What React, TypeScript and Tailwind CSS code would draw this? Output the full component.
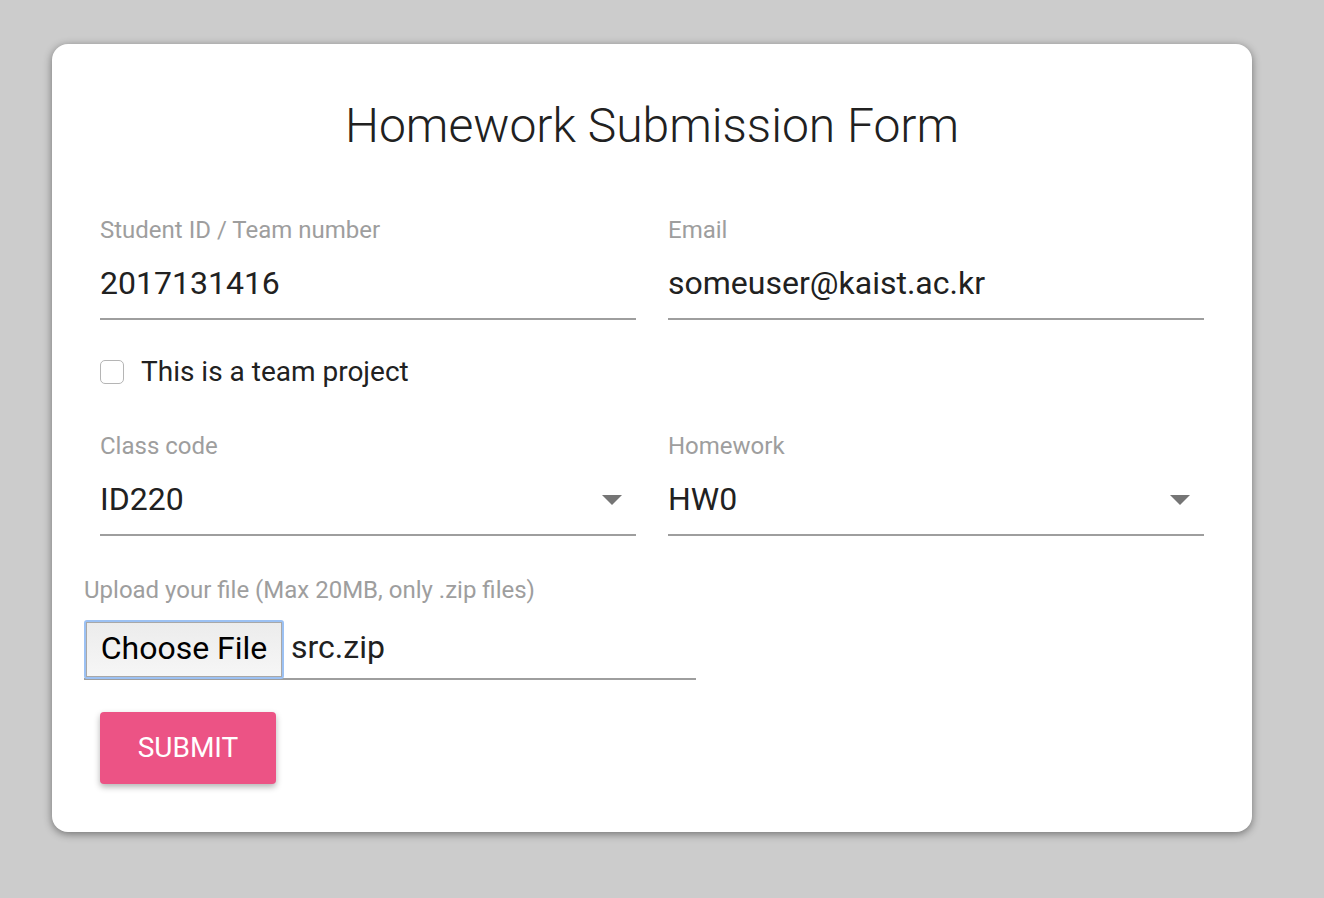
import React from "react";

function Field({ label, value, select }: { label: string; value: string; select?: boolean }) {
  return (
    <div className="flex flex-col">
      <div className="text-[24px] leading-[24px] text-[#9e9e9e] h-[24px] whitespace-nowrap">{label}</div>
      <div className="mt-[20px] h-[58px] border-b-2 border-[#9e9e9e] flex items-start justify-between">
        <span className="text-[32px] leading-[36px] text-[#212121] pt-[3px]">{value}</span>
        {select && (
          <svg width="20" height="10" viewBox="0 0 20 10" className="mt-[17px] mr-[14px]">
            <path d="M0 0 L20 0 L10 10 Z" fill="#757575" />
          </svg>
        )}
      </div>
    </div>
  );
}

export default function App() {
  return (
    <div className="min-h-[898px] w-full bg-[#cccccc] pt-[44px] pl-[52px]" style={{ fontFamily: "Roboto, 'Noto Sans', sans-serif" }}>
      <div className="w-[1200px] h-[788px] bg-white rounded-[16px] shadow-[0_2px_8px_rgba(0,0,0,0.45)] px-[48px] pt-[52px]">
        <h1 className="text-center text-[48px] leading-[60px] font-light text-[#212121]">Homework Submission Form</h1>
        <div className="grid grid-cols-2 gap-x-[32px] mt-[62px]">
          <Field label="Student ID / Team number" value="2017131416" />
          <Field label="Email" value="someuser@kaist.ac.kr" />
        </div>
        <div className="flex items-center mt-[40px] h-[24px]">
          <div className="w-[24px] h-[24px] rounded-[5px] border border-[#b5b5b5] bg-white" />
          <span className="ml-[17px] text-[28px] leading-[30px] text-[#212121]">This is a team project</span>
        </div>
        <div className="grid grid-cols-2 gap-x-[32px] mt-[50px]">
          <Field label="Class code" value="ID220" select />
          <Field label="Homework" value="HW0" select />
        </div>
        <div className="-ml-[16px] mt-[42px]">
          <div className="text-[24px] leading-[24px] text-[#9e9e9e] whitespace-nowrap">Upload your file (Max 20MB, only .zip files)</div>
          <div className="mt-[18px] w-[612px] h-[60px] border-b-2 border-[#9e9e9e] flex items-start">
            <div className="h-[59px] w-[200px] rounded-[3px] border-2 border-[#9cc1f3] flex">
              <div className="flex-1 border border-[#a8a8a8] bg-gradient-to-b from-[#ececec] to-[#f6f6f6] flex items-center justify-center pb-[4px] text-[32px] text-black">
                Choose File
              </div>
            </div>
            <span className="ml-[7px] text-[32px] leading-[54px] text-[#212121]">src.zip</span>
          </div>
        </div>
        <button className="mt-[32px] w-[176px] h-[72px] rounded-[4px] bg-[#ec5385] text-white text-[28px] shadow-[0_3px_6px_rgba(0,0,0,0.3)]">
          SUBMIT
        </button>
      </div>
    </div>
  );
}
